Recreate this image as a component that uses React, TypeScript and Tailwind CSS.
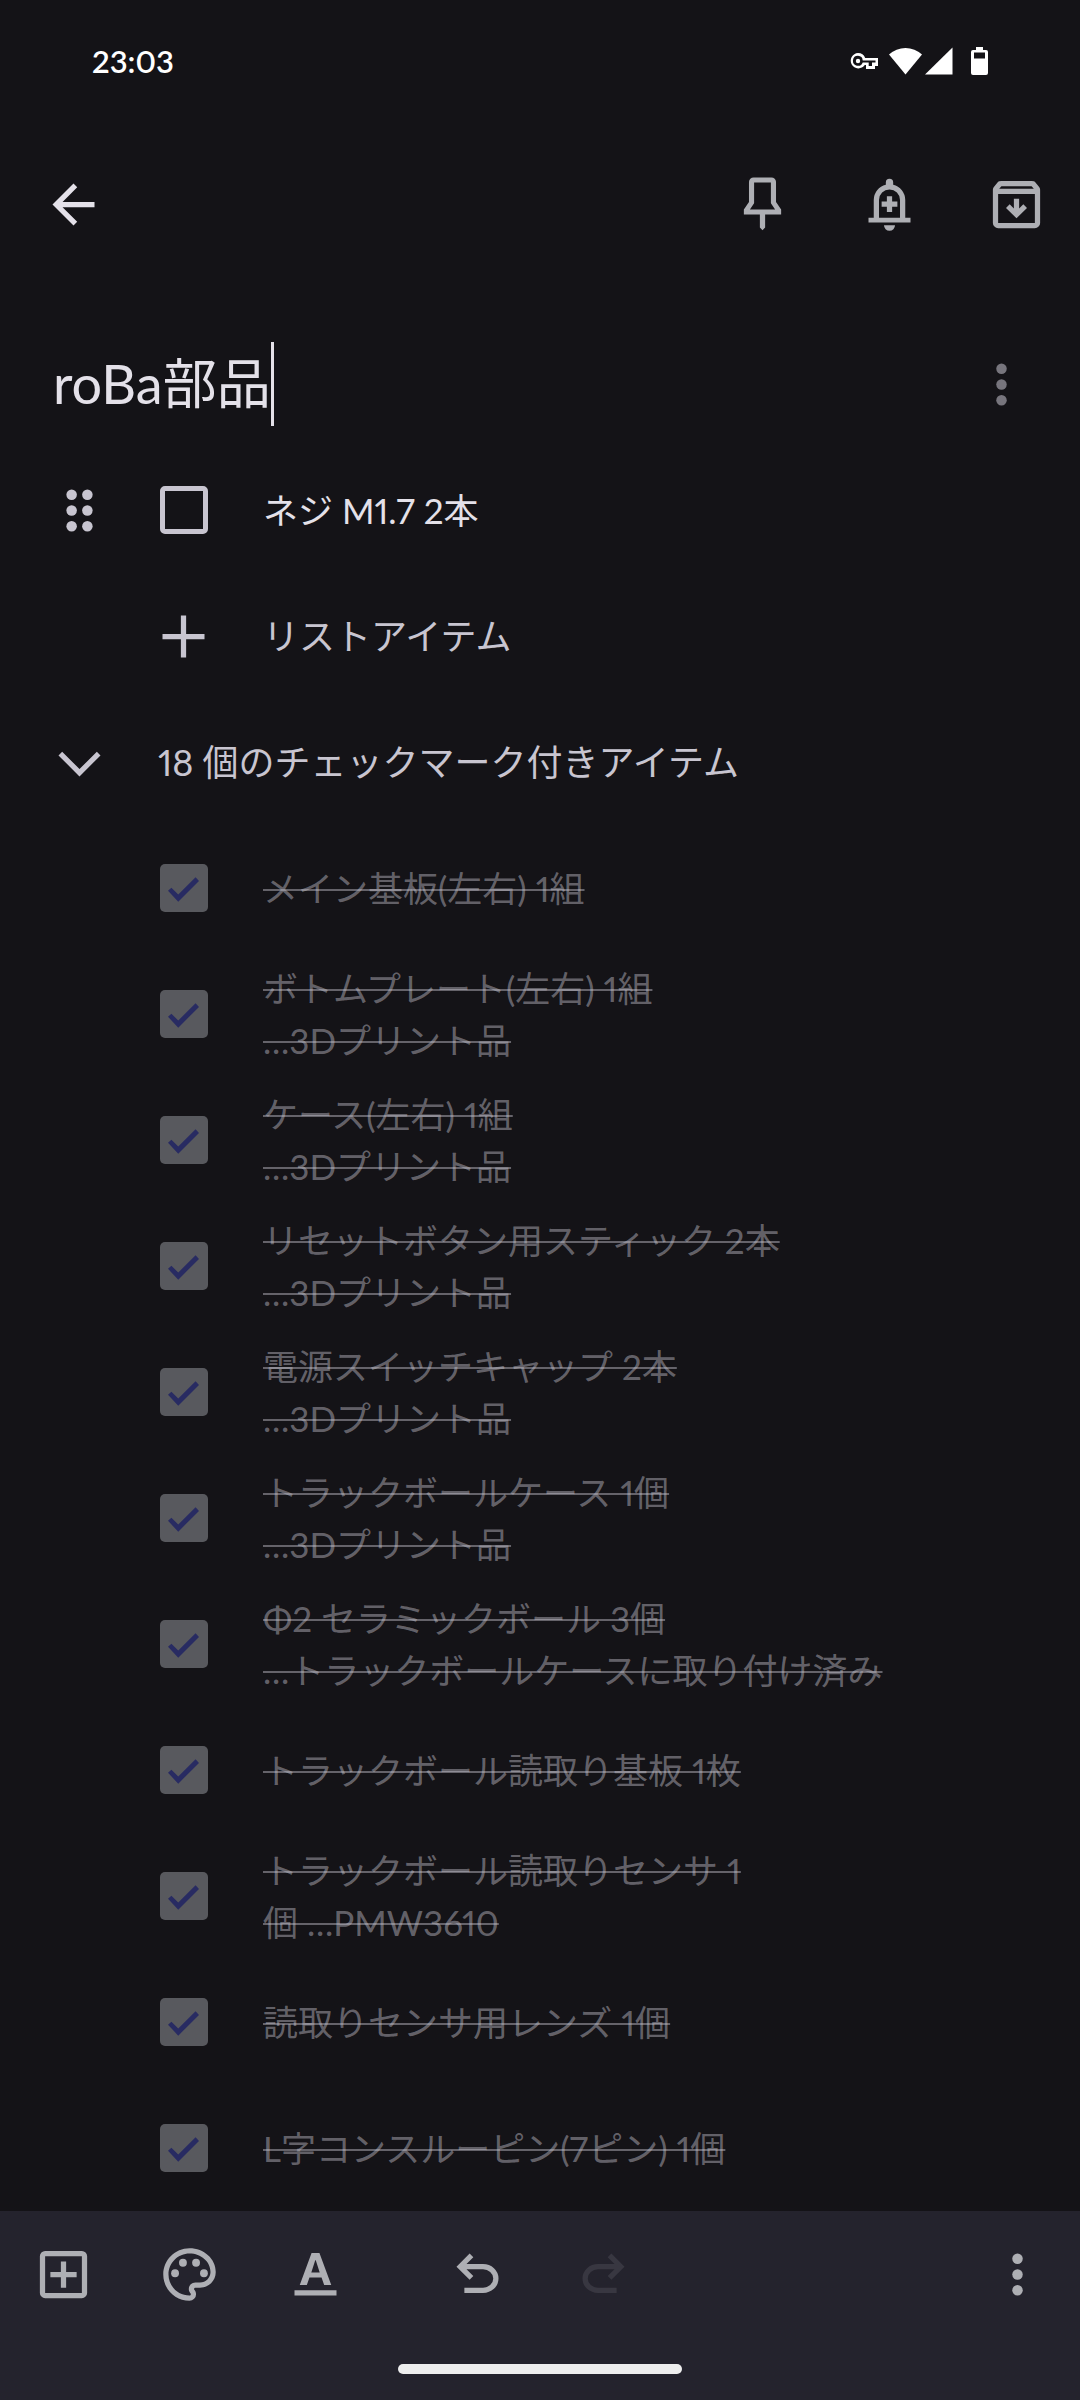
import { useState, type ReactNode } from "react";

function Icon({ children, className = "" }: { children: ReactNode; className?: string }) {
  return (
    <svg viewBox="0 0 24 24" fill="currentColor" aria-hidden="true" className={`size-[63px] shrink-0 ${className}`}>
      {children}
    </svg>
  );
}

const ArrowBack = () => (
  <Icon>
    <path d="M20 11H7.83l5.59-5.59L12 4l-8 8 8 8 1.41-1.41L7.83 13H20z" />
  </Icon>
);

const Pin = () => (
  <Icon>
    <path
      fillRule="evenodd"
      d="M8.6 1.7h6.8a1.75 1.75 0 0 1 1.75 1.75v7.6L19.1 13.9v1.9h-6.1v5l-1 1-1-1v-5H4.9v-1.9l1.95-2.85v-7.6A1.75 1.75 0 0 1 8.6 1.7zM8.8 3.6v7.9l-1.6 2.4h9.6l-1.6-2.4V3.6z"
    />
  </Icon>
);

const BellPlus = () => (
  <Icon>
    <path
      fillRule="evenodd"
      d="M10.6 4.5V3.6a1.4 1.4 0 0 1 2.8 0v.9A6 6 0 0 1 18 10.3V17h2v1.9H4V17h2v-6.700a6 6 0 0 1 4.600-5.800zM8 17h8v-6.700a4 4 0 0 0-8 0z"
    />
    <path d="M11 8.900h2v2h2v2h-2v2h-2v-2H9v-2h2zM9.900 19.900h4.200a2.100 2.100 0 0 1-4.200 0z" />
  </Icon>
);

const Archive = () => (
  <Icon>
    <path d="M12 17.200l4-3.900-1.400-1.400-1.600 1.600V9.800h-2v3.700l-1.600-1.600L8 13.300zM5 8v11h14V8zm0 13q-.825 0-1.413-.587Q3 19.825 3 19V6.525q0-.35.113-.675.112-.325.337-.6L4.700 3.725q.275-.35.688-.538Q5.800 3 6.250 3h11.500q.45 0 .863.187.412.188.687.538l1.250 1.525q.225.275.337.6.113.325.113.675V19q0 .825-.587 1.413Q19.825 21 19 21zm.4-15h13.200l-.85-1H6.250z" />
  </Icon>
);

const MoreVert = () => (
  <Icon>
    <circle cx="12" cy="6" r="2" />
    <circle cx="12" cy="12" r="2" />
    <circle cx="12" cy="18" r="2" />
  </Icon>
);

const DragHandle = () => (
  <Icon>
    <circle cx="9" cy="6" r="2" />
    <circle cx="9" cy="12" r="2" />
    <circle cx="9" cy="18" r="2" />
    <circle cx="15" cy="6" r="2" />
    <circle cx="15" cy="12" r="2" />
    <circle cx="15" cy="18" r="2" />
  </Icon>
);

const Plus = () => (
  <Icon>
    <path d="M11 4h2v7h7v2h-7v7h-2v-7H4v-2h7z" />
  </Icon>
);

const ChevronDown = () => (
  <Icon>
    <path d="M5.400 7.900 12 14.500l6.600-6.600L20 9.300l-8 8-8-8z" />
  </Icon>
);

const AddBox = () => (
  <Icon>
    <path d="M11 17h2v-4h4v-2h-4V7h-2v4H7v2h4zM5 21a2 2 0 0 1-2-2V5a2 2 0 0 1 2-2h14a2 2 0 0 1 2 2v14a2 2 0 0 1-2 2zm0-2h14V5H5z" />
  </Icon>
);

const Palette = () => (
  <Icon>
    <path d="M12 22C6.490 22 2 17.510 2 12S6.490 2 12 2s10 4.040 10 9c0 3.310-2.690 6-6 6h-1.770c-.28 0-.5.22-.5.5 0 .12.05.23.13.33.41.47.64 1.060.64 1.670A2.500 2.500 0 0 1 12 22zm0-18c-4.410 0-8 3.590-8 8s3.590 8 8 8c.28 0 .5-.22.5-.5a.54.54 0 0 0-.14-.35c-.41-.46-.63-1.050-.63-1.650a2.500 2.500 0 0 1 2.500-2.500H16c2.210 0 4-1.790 4-4 0-3.860-3.590-7-8-7z" />
    <circle cx="6.5" cy="11.5" r="1.5" />
    <circle cx="9.5" cy="7.5" r="1.5" />
    <circle cx="14.5" cy="7.5" r="1.5" />
    <circle cx="17.5" cy="11.5" r="1.5" />
  </Icon>
);

const TextFormat = () => (
  <Icon>
    <path fillRule="evenodd" d="M10.500 3.800h3L18 16h-2.700l-1-2.900H9.700L8.700 16H6zM10.400 11.200h3.200L12.100 6.600h-.2zM4 18h16v2H4z" />
  </Icon>
);

const Undo = ({ className }: { className?: string }) => (
  <Icon className={className}>
    <path d="M7 19v-2h7.100q1.575 0 2.738-1Q18 15 18 13.500T16.837 11Q15.675 10 14.100 10H7.800l2.600 2.600L9 14 4 9l5-5 1.400 1.400L7.800 8h6.300q2.425 0 4.163 1.575Q20 11.150 20 13.500t-1.738 3.925Q16.525 19 14.100 19z" />
  </Icon>
);

function StatusBar() {
  return (
    <div className="flex h-[120px] items-center justify-between px-[92px] pt-[2px] text-white">
      <time className="text-[31px] font-semibold">23:03</time>
      <svg viewBox="0 0 138 30" className="h-[30px] w-[138px]" fill="currentColor" aria-hidden="true">
        <path
          fillRule="evenodd"
          d="M8 7a7.700 7.700 0 0 1 7.200 5H28v8h-3v3h-9v-4h-1.200A7.700 7.700 0 1 1 8 7zm0 2.800a5 5 0 1 0 4.700 6.600h6V20H22v-3.600h3.500v-1.800H12.700A5 5 0 0 0 8 9.800z"
        />
        <circle cx="8" cy="15" r="2.200" />
        <path d="M39 8.500a24 24 0 0 1 33 0L55.500 28.500z" />
        <path d="M102.500 1.500v27H75z" />
        <path fillRule="evenodd" d="M126 1h7v3h3q2 0 2 2v21q0 2-2 2h-13q-2 0-2-2V6q0-2 2-2h3zM124 6.500v6h11v-6z" />
      </svg>
    </div>
  );
}

const doneItems: string[][] = [
  ["メイン基板(左右) 1組"],
  ["ボトムプレート(左右) 1組", "…3Dプリント品"],
  ["ケース(左右) 1組", "…3Dプリント品"],
  ["リセットボタン用スティック 2本", "…3Dプリント品"],
  ["電源スイッチキャップ 2本", "…3Dプリント品"],
  ["トラックボールケース 1個", "…3Dプリント品"],
  ["Φ2 セラミックボール 3個", "…トラックボールケースに取り付け済み"],
  ["トラックボール読取り基板 1枚"],
  ["トラックボール読取りセンサ 1", "個 …PMW3610"],
  ["読取りセンサ用レンズ 1個"],
  ["L字コンスルーピン(7ピン) 1個"],
];

function CheckBox({ id, defaultChecked }: { id: string; defaultChecked?: boolean }) {
  return (
    <span className="grid w-[63px] shrink-0 place-items-center">
      <input
        id={id}
        type="checkbox"
        defaultChecked={defaultChecked}
        className="peer col-start-1 row-start-1 size-[48px] appearance-none rounded-[5px] border-[5px] border-[#c8c5d0] checked:border-0 checked:bg-[#58595e]"
      />
      <svg
        viewBox="0 0 24 24"
        className="pointer-events-none col-start-1 row-start-1 hidden size-[63px] fill-[#282b62] peer-checked:block"
        aria-hidden="true"
      >
        <path d="M10 17 6.100 12.900 7.400 11.700 10 14.300 16.600 7.700 17.900 9.100z" />
      </svg>
    </span>
  );
}

function ToolButton({ label, disabled, children }: { label: string; disabled?: boolean; children: ReactNode }) {
  return (
    <button
      type="button"
      aria-label={label}
      disabled={disabled}
      className="grid size-[126px] shrink-0 place-items-center text-[#aeafb4] disabled:text-[#383741]"
    >
      {children}
    </button>
  );
}

export default function App() {
  const [title, setTitle] = useState("roBa部品");

  return (
    <div
      lang="ja"
      className="flex min-h-screen flex-col bg-[#141317] font-['Lato','Noto_Sans_CJK_JP',sans-serif] text-[35px] leading-[52px] text-[#e4e1e9] proportional-nums"
    >
      <StatusBar />

      <header className="flex h-[168px] items-center justify-between pr-px pl-[42px]">
        <button type="button" aria-label="戻る">
          <ArrowBack />
        </button>
        <div className="flex gap-px">
          <ToolButton label="固定">
            <Pin />
          </ToolButton>
          <ToolButton label="リマインダー">
            <BellPlus />
          </ToolButton>
          <ToolButton label="アーカイブ">
            <Archive />
          </ToolButton>
        </div>
      </header>

      <main className="flex flex-col">
        <div className="mt-[54px] mb-[21px] flex h-[84px] items-center pr-[47px] pl-[53px]">
          <input
            aria-label="タイトル"
            value={title}
            onChange={(e) => setTitle(e.target.value)}
            className="field-sizing-content h-[84px] bg-transparent pb-2 text-[54px] outline-none"
          />
          <span className="h-full w-[3px] bg-[#e4e1e9]" />
          <button type="button" aria-label="リストのオプション" className="ml-auto text-[#77757d]">
            <MoreVert />
          </button>
        </div>

        <div className="flex h-[126px] items-center pl-[48px] text-[#c8c5d0]">
          <button type="button" aria-label="並べ替え" className="mr-[41px]">
            <DragHandle />
          </button>
          <CheckBox id="open-0" />
          <label htmlFor="open-0" className="ml-[48px] text-[#e4e1e9]">
            ネジ M1.7 2本
          </label>
        </div>

        <button type="button" className="flex h-[126px] items-center gap-[48px] pl-[152px] text-[36px] text-[#c8c5d0]">
          <Plus />
          リストアイテム
        </button>

        <button
          type="button"
          aria-expanded="true"
          className="flex h-[126px] items-center gap-[47px] pl-[48px] text-[36px] text-[#c8c5d0]"
        >
          <ChevronDown />
          18 個のチェックマーク付きアイテム
        </button>

        <ul>
          {doneItems.map((lines, i) => (
            <li key={i} className="flex min-h-[126px] items-center gap-[48px] pl-[152px]">
              <CheckBox id={`done-${i}`} defaultChecked />
              <label htmlFor={`done-${i}`} className="text-[#c8c5d0]/45 line-through decoration-2">
                {lines.map((line) => (
                  <span key={line} className="block">
                    {line}
                  </span>
                ))}
              </label>
            </li>
          ))}
        </ul>
      </main>

      <footer className="mt-auto bg-[#24232d]">
        <div className="flex">
          <ToolButton label="追加">
            <AddBox />
          </ToolButton>
          <ToolButton label="背景">
            <Palette />
          </ToolButton>
          <ToolButton label="書式">
            <TextFormat />
          </ToolButton>
          <div className="ml-9 flex">
            <ToolButton label="元に戻す">
              <Undo />
            </ToolButton>
            <ToolButton label="やり直す" disabled>
              <Undo className="-scale-x-100" />
            </ToolButton>
          </div>
          <div className="ml-auto">
            <ToolButton label="その他">
              <MoreVert />
            </ToolButton>
          </div>
        </div>
        <div className="flex h-[63px] items-center justify-center">
          <div className="h-[10px] w-[284px] rounded-full bg-[#eeeeee]" />
        </div>
      </footer>
    </div>
  );
}
